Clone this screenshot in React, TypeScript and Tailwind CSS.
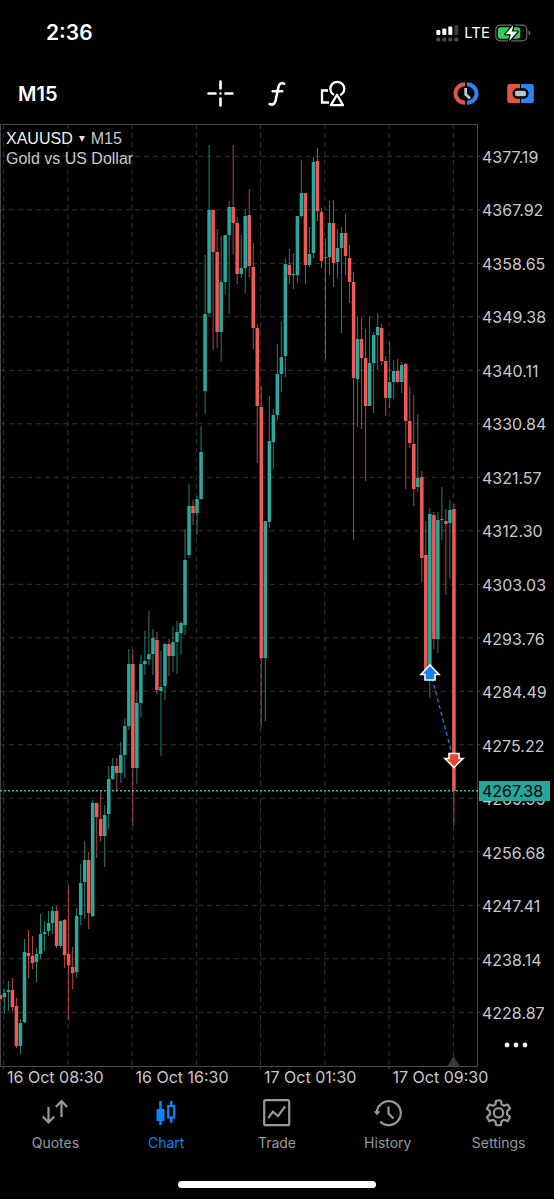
import React from 'react';

type Candle = [dir: 'u' | 'd', top: number, bottom: number, high: number, low: number];

// Bars from oldest to newest: body top/bottom, then wick high/low, in plot units
const CANDLES: Candle[] = [
  ['d', 995, 999, 995, 999], ['u', 993, 997, 989, 1014], ['u', 990, 992, 981, 1011], ['d', 990, 1007, 978, 1011],
  ['d', 1006, 1046, 998, 1048], ['u', 1023, 1046, 1019, 1054], ['u', 952, 1022, 939, 1023], ['d', 953, 956, 930, 978],
  ['d', 956, 963, 936, 969], ['u', 954, 962, 948, 982], ['u', 934, 954, 914, 959], ['u', 932, 934, 921, 951],
  ['u', 923, 931, 911, 936], ['u', 911, 923, 906, 934], ['d', 911, 946, 906, 948], ['u', 921, 946, 920, 948],
  ['d', 920, 955, 919, 968], ['d', 954, 965, 885, 1020], ['d', 967, 973, 947, 989], ['u', 916, 972, 908, 978],
  ['u', 883, 915, 864, 925], ['u', 860, 882, 841, 919], ['d', 860, 913, 852, 929], ['u', 803, 916, 800, 917],
  ['d', 803, 817, 803, 858], ['d', 819, 836, 791, 842], ['u', 815, 836, 805, 867], ['u', 779, 814, 766, 829],
  ['u', 766, 779, 758, 780], ['d', 766, 773, 758, 790], ['u', 755, 773, 742, 783], ['u', 726, 755, 718, 778],
  ['u', 664, 726, 649, 730], ['d', 664, 768, 650, 826], ['u', 703, 768, 692, 784], ['u', 664, 703, 655, 717],
  ['u', 661, 664, 631, 675], ['u', 654, 659, 611, 665], ['u', 638, 654, 629, 675], ['d', 640, 690, 632, 694],
  ['u', 687, 691, 651, 756], ['u', 644, 686, 643, 700], ['d', 644, 656, 639, 676], ['u', 642, 656, 626, 672],
  ['u', 632, 642, 621, 674], ['u', 623, 633, 621, 655], ['u', 560, 625, 529, 635], ['u', 506, 555, 484, 558],
  ['d', 506, 513, 500, 525], ['u', 499, 513, 496, 535], ['u', 452, 499, 426, 499], ['u', 314, 391, 255, 414],
  ['u', 210, 313, 145, 316], ['d', 210, 252, 210, 350], ['d', 252, 332, 229, 348], ['u', 282, 332, 236, 362],
  ['u', 235, 282, 235, 294], ['u', 207, 235, 201, 314], ['d', 207, 223, 145, 254], ['d', 223, 274, 217, 284],
  ['u', 268, 274, 235, 278], ['u', 216, 268, 210, 293], ['d', 215, 266, 189, 277], ['d', 267, 328, 243, 349],
  ['d', 328, 406, 324, 463], ['d', 407, 658, 386, 727], ['u', 521, 658, 521, 721], ['u', 441, 522, 396, 528],
  ['u', 415, 442, 409, 469], ['u', 374, 415, 344, 420], ['u', 357, 374, 322, 392], ['u', 264, 356, 258, 377],
  ['d', 265, 275, 249, 284], ['u', 274, 275, 253, 289], ['u', 216, 275, 216, 283], ['u', 193, 216, 160, 218],
  ['d', 193, 265, 193, 284], ['u', 254, 265, 227, 267], ['u', 162, 253, 157, 258], ['d', 161, 211, 148, 221],
  ['d', 212, 261, 208, 268], ['u', 257, 258, 238, 359], ['u', 223, 257, 201, 275], ['d', 223, 263, 200, 287],
  ['u', 248, 262, 229, 278], ['u', 233, 248, 227, 333], ['d', 233, 256, 214, 275], ['d', 258, 282, 245, 303],
  ['d', 282, 378, 272, 540], ['u', 339, 379, 316, 427], ['d', 339, 358, 318, 429], ['d', 358, 406, 329, 481],
  ['u', 363, 406, 316, 406], ['u', 335, 363, 332, 413], ['u', 327, 335, 314, 370], ['d', 328, 361, 324, 365],
  ['d', 361, 398, 356, 416], ['u', 382, 398, 342, 408], ['u', 371, 382, 360, 399], ['d', 371, 382, 359, 383],
  ['u', 365, 382, 362, 393], ['d', 364, 421, 363, 489], ['d', 421, 443, 386, 448], ['d', 444, 489, 395, 506],
  ['u', 478, 487, 414, 492], ['d', 477, 558, 471, 582], ['d', 555, 672, 521, 673], ['u', 514, 676, 508, 698],
  ['d', 515, 639, 512, 649], ['u', 520, 639, 512, 653], ['u', 519, 520, 487, 540], ['d', 521, 524, 509, 595],
  ['u', 510, 523, 500, 579], ['d', 509, 791, 504, 826],
];

const PRICES = [
  '4377.19', '4367.92', '4358.65', '4349.38', '4340.11', '4330.84', '4321.57', '4312.30', '4303.03',
  '4293.76', '4284.49', '4275.22', '4265.95', '4256.68', '4247.41', '4238.14', '4228.87',
];
const TIMES = ['16 Oct 08:30', '16 Oct 16:30', '17 Oct 01:30', '17 Oct 09:30'];

const BAR_STEP = 4.0135;
const PLOT = { top: 124, bottom: 1066, width: 478 };
const LAST_PRICE_Y = 790.7;
const UP = '#2aa89b';
const DOWN = '#f05a56';

const gridX = Array.from({ length: 8 }, (_, i) => 3.6 + i * 64.25);
const gridY = PRICES.map((_, i) => 156.3 + i * 53.5);

function PricePlot() {
  return (
    <svg viewBox="0 124 478 942" className="block h-auto w-full overflow-visible" role="img" aria-label="XAUUSD M15 candles">
      <g stroke="#323236" strokeDasharray="5 4">
        {gridX.map((x) => (
          <line key={x} x1={x} x2={x} y1={PLOT.top} y2={PLOT.bottom} />
        ))}
        {gridY.map((y) => (
          <line key={y} x1={0} x2={PLOT.width} y1={y} y2={y} />
        ))}
      </g>

      {/* Axis ticks */}
      <g stroke="#48484a">
        {gridY.map((y) => (
          <line key={y} x1={477} x2={480} y1={y} y2={y} />
        ))}
        {gridX.filter((_, i) => i % 2 === 0).map((x) => (
          <line key={x} x1={x} x2={x} y1={1066} y2={1069} />
        ))}
        <path d="M0.5 1066V124.5H477.5V1066.5H0" fill="none" />
      </g>
      <path d="M447.500 1066L453.500 1056L459.500 1066Z" fill="#3a3a3c" />

      {CANDLES.map(([dir, top, bottom, high, low], i) => {
        const x = 0.4 + i * BAR_STEP;
        const color = dir === 'u' ? UP : DOWN;
        return (
          <g key={i} fill={color}>
            <rect x={x - 0.5} y={high} width={1} height={low - high} opacity={0.75} />
            <rect x={x - 1.75} y={top} width={3.5} height={Math.max(bottom - top, 1)} />
          </g>
        );
      })}

      <line x1={0} x2={478} y1={LAST_PRICE_Y} y2={LAST_PRICE_Y} stroke="#4fb3a6" strokeWidth={1.4} strokeDasharray="2 2" />

      {/* Closed trade: buy, then exit */}
      <line x1={432} x2={452} y1={678} y2={754} stroke="#1a7cf0" strokeWidth={1.3} strokeDasharray="4 3" />
      <path d="M430 665L439 674.500H435V680H425V674.500H421Z" fill="#1480fa" stroke="#fff" strokeWidth={1.6} />
      <path d="M454 767.500L463 758.500H459V753.500H449V758.500H445Z" fill="#e8452f" stroke="#fff" strokeWidth={1.6} />
    </svg>
  );
}

function StatusBar() {
  return (
    <div className="flex h-[66px] items-center justify-between pr-[23px] pl-[46px]">
      <span className="text-[21px] leading-6 font-semibold">2:36</span>
      <div className="flex items-center gap-[5px]">
        <svg width="23" height="18" viewBox="0 0 23 18" fill="#fff" aria-hidden="true">
          <rect x="0.300" y="6" width="4" height="5" rx="1" />
          <rect x="6.300" y="4.500" width="4" height="6.500" rx="1" />
          <rect x="12.300" y="2.500" width="4" height="8.500" rx="1" />
          <rect x="18.300" y="1" width="4" height="10" rx="1" fill="#3a3a3c" />
          {[0.3, 6.3, 12.3, 18.3].map((x) => (
            <rect key={x} x={x} y="13.500" width="4" height="4" rx="1.200" fill="#4a4a4c" />
          ))}
        </svg>
        <span className="text-[15px] leading-5">LTE</span>
        <svg width="36" height="18" viewBox="0 0 36 18" aria-hidden="true">
          <rect x="0.800" y="1.200" width="31" height="15.600" rx="4.500" fill="none" stroke="#6a6a6c" strokeWidth="1.200" />
          <rect x="2.800" y="3.200" width="22.500" height="11.600" rx="2.800" fill="#30d158" />
          <path d="M33.500 6.500v5c1.200-.4 1.800-1.400 1.800-2.500s-.6-2.100-1.800-2.500z" fill="#6a6a6c" />
          <path d="M18.500 1L10.300 10.200h5.600L14 17.200l8.600-9.600h-5.800z" fill="#fff" stroke="#000" strokeWidth="2.400" strokeLinejoin="round" paintOrder="stroke" />
        </svg>
      </div>
    </div>
  );
}

function Toolbar() {
  return (
    <header className="grid h-[58px] grid-cols-3 items-center pr-5 pb-[3px] pl-[18px]">
      <button type="button" className="justify-self-start text-xl font-semibold">M15</button>

      <div className="flex items-center justify-center gap-[31px]">
        <button type="button" aria-label="Crosshair">
          <svg width="27" height="27" viewBox="0 0 27 27" fill="none" stroke="#fff" strokeWidth="2.600" strokeLinecap="round">
            <path d="M13.500 1.500v7M13.500 18.500v7M1.500 13.500h7M18.500 13.500h7" />
            <circle cx="13.500" cy="13.500" r="1.200" fill="#fff" stroke="none" />
          </svg>
        </button>
        <button type="button" aria-label="Indicators" className="flex w-6 justify-center">
          <svg width="18" height="26" viewBox="0 0 18 26" fill="none" stroke="#fff" strokeWidth="2.500" strokeLinecap="round">
            <path d="M16.200 2.600C12.600 1.300 11.100 3 10.400 6.300L7.700 19C7 22.600 5.300 24.400 1.600 23" />
            <path d="M4.800 10.300h9.400" />
          </svg>
        </button>
        <button type="button" aria-label="Objects">
          <svg width="26" height="27" viewBox="0 0 26 27" fill="none" stroke="#fff" strokeWidth="2.300">
            <path d="M8 10.500H2v12h7" />
            <circle cx="17.300" cy="8.800" r="7" />
            <path d="M17 14.800L23 25.200H10.900Z" fill="#000" stroke="#000" strokeWidth="5" />
            <path d="M17 14.800L23 25.200H10.900Z" fill="#000" strokeLinejoin="round" />
          </svg>
        </button>
      </div>

      <div className="flex items-center gap-[27px] justify-self-end">
        <button type="button" aria-label="Trading session">
          <svg width="28" height="23" viewBox="0 0 28 23" fill="none" strokeWidth="4">
            <path d="M13 2.300A9.500 9.200 0 0 0 13 20.700" stroke="#e25546" />
            <path d="M15 2.300A9.500 9.200 0 0 1 15 20.700" stroke="#2d83f2" />
            <path d="M13.700 6V12.300L18 16.500" stroke="#c2ccd0" strokeWidth="2.800" />
          </svg>
        </button>
        <button type="button" aria-label="One click trading">
          <svg width="27" height="19" viewBox="0 0 27 19">
            <path d="M13 0H2.200A2 2 0 0 0 0.200 2V17A2 2 0 0 0 2.200 19H13Z" fill="#e25546" />
            <path d="M14 0H24.800A2 2 0 0 1 26.800 2V17A2 2 0 0 1 24.800 19H14Z" fill="#2d83f2" />
            <rect x="6.700" y="5.500" width="13.600" height="8" rx="3.500" fill="#b8c4c8" stroke="#000" strokeWidth="2.400" />
          </svg>
        </button>
      </div>
    </header>
  );
}

const TABS = [
  {
    label: 'Quotes',
    icon: <path d="M7.500 8v15.500M1.800 17.500l5.700 6 5.700-6M20.500 18V2M14.800 8l5.700-6 5.700 6" />,
  },
  {
    label: 'Chart',
    active: true,
    icon: (
      <>
        <path d="M8.500 2v24" strokeWidth="2.600" />
        <rect x="4.500" y="10" width="8" height="12" fill="currentColor" stroke="none" />
        <path d="M19.200 2v5M19.200 19v4.500" strokeWidth="2.600" />
        <rect x="16.200" y="7" width="6" height="11.500" strokeWidth="2.200" />
      </>
    ),
  },
  {
    label: 'Trade',
    icon: (
      <>
        <rect x="1.200" y="1.200" width="25" height="25" rx="1.500" />
        <path d="M5.300 19l4.700-6.400 5 4.600L22 7.500" />
      </>
    ),
  },
  {
    label: 'History',
    icon: (
      <>
        <path d="M2.800 13.500A12 12 0 1 1 6.200 22.500" />
        <path d="M-0.500 12.300h7l-3.500 4z" fill="currentColor" stroke="none" />
        <path d="M14.500 7.500v7l5 5" />
      </>
    ),
  },
  {
    label: 'Settings',
    icon: (
      <>
        <path d="M11.200 1.500h4.600l.8 3.900 2.400 1.400 3.700-1.300 2.300 4.100-2.900 2.600v3.200l2.900 2.600-2.300 4.100-3.700-1.300-2.400 1.400-.8 3.900h-4.600l-.8-3.900L8 20.800l-3.700 1.300L2 18l2.900-2.600v-3.200L2 9.600l2.300-4.100L8 6.800l2.400-1.400z" strokeLinejoin="round" />
        <circle cx="13.500" cy="13.800" r="4.700" />
      </>
    ),
  },
];

function TabBar() {
  return (
    <nav className="grid grid-cols-5 pt-3">
      {TABS.map(({ label, icon, active }) => (
        <button
          key={label}
          type="button"
          className={`flex flex-col items-center gap-[6px] text-sm leading-5 ${active ? 'text-[#0a84ff]' : 'text-[#98989c]'}`}
        >
          <svg width="28" height="28" viewBox="0 0 28 28" fill="none" stroke="currentColor" strokeWidth="2.200" className="overflow-visible" aria-hidden="true">
            {icon}
          </svg>
          {label}
        </button>
      ))}
    </nav>
  );
}

export default function App() {
  const lastPriceTop = ((LAST_PRICE_Y - PLOT.top) / (PLOT.bottom - PLOT.top)) * 100;

  return (
    <div className="min-h-screen bg-black font-['Inter',sans-serif] text-white">
      <StatusBar />
      <Toolbar />

      <main>
        <div className="flex">
          <div className="relative min-w-0 flex-1">
            <PricePlot />
            <div className="absolute top-[5px] left-[6px] font-['Liberation_Sans',sans-serif] text-base leading-5 text-[#c8c8cc]">
              <button type="button" className="flex items-center gap-[6px]">
                <span className="text-[#f0f0f0]">XAUUSD</span>
                <svg width="6" height="6" viewBox="0 0 6 6" fill="#e0e0e0" aria-hidden="true">
                  <path d="M0 0h6L3 6z" />
                </svg>
                <span>M15</span>
              </button>
              <p>Gold vs US Dollar</p>
            </div>
          </div>

          {/* Price scale */}
          <div className="relative flex w-[76px] flex-col pt-[6px] pb-[26px] text-base leading-5 text-[#c8c8cc]">
            {PRICES.map((price) => (
              <div key={price} className="flex flex-1 items-center pl-1">{price}</div>
            ))}
            <div
              className="absolute right-1 left-px -translate-y-1/2 bg-[#26a69a] pl-[3px] text-black"
              style={{ top: `${lastPriceTop}%` }}
            >
              4267.38
            </div>
            <button type="button" aria-label="More" className="absolute bottom-3 left-[26px]">
              <svg width="24" height="18" viewBox="0 0 24 18" fill="#f0f0f0">
                <circle cx="3" cy="9" r="2.400" />
                <circle cx="12" cy="9" r="2.400" />
                <circle cx="21" cy="9" r="2.400" />
              </svg>
            </button>
          </div>
        </div>

        {/* Time scale */}
        <div className="flex pt-px text-base leading-5 whitespace-nowrap text-[#c8c8cc]">
          {TIMES.map((time) => (
            <div key={time} className="w-[23.2%] shrink-0 pl-[7px]">{time}</div>
          ))}
        </div>
      </main>

      <TabBar />
      <div className="mx-auto mt-7 h-[7px] w-[198px] rounded-full bg-white" />
    </div>
  );
}
